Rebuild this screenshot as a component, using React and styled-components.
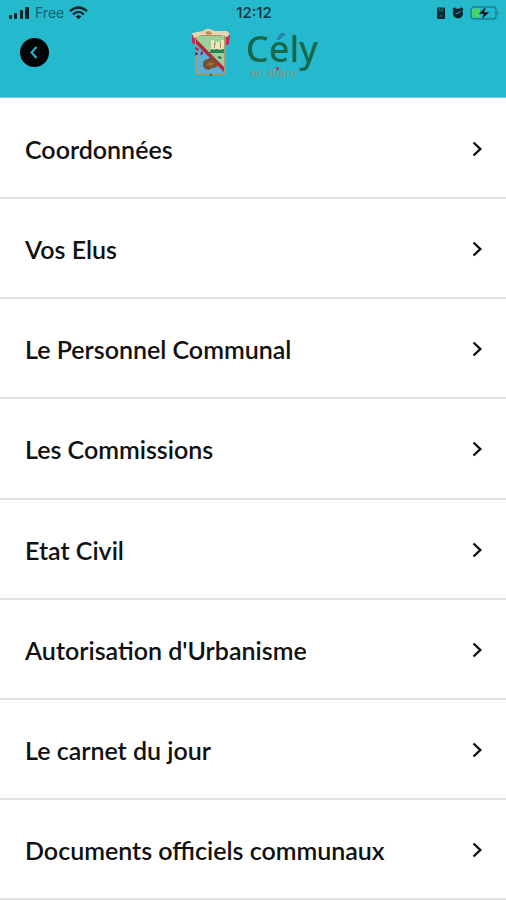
import React from "react";
import styled, { createGlobalStyle } from "styled-components";

const GlobalStyle = createGlobalStyle`
  *, *::before, *::after { box-sizing: border-box; }
  body { margin: 0; background: #fff; }
`;

const Page = styled.div`
  display: flex;
  flex-direction: column;
  min-height: 100vh;
  font-family: Lato, "Open Sans", sans-serif;
  color: #111;
`;

const Header = styled.header`
  background: #25b9cd;
  height: 98px;
  flex: none;
  border-bottom: 1px solid #78d3df;
`;

const StatusBar = styled.div`
  display: grid;
  grid-template-columns: 1fr auto 1fr;
  align-items: center;
  height: 26px;
  padding: 0 6px 0 8px;
  font-family: Inter, sans-serif;
  font-size: 14px;
  line-height: 26px;
`;

const StatusGroup = styled.div`
  display: flex;
  align-items: center;
  gap: ${(p) => p.$gap}px;
  justify-content: ${(p) => (p.$end ? "flex-end" : "flex-start")};
`;

const Carrier = styled.span`
  color: #126470;
`;

const Clock = styled.time`
  color: #06323a;
  font-size: 15px;
  font-weight: 500;
`;

const TitleBar = styled.div`
  display: grid;
  grid-template-columns: 1fr auto 1fr;
  align-items: center;
  height: 50px;
  padding: 0 20px;
`;

const BackButton = styled.button`
  display: flex;
  align-items: center;
  justify-content: center;
  width: 29px;
  height: 29px;
  padding: 0;
  border: 0;
  border-radius: 50%;
  background: #020607;
  color: #25b9cd;
  cursor: pointer;
`;

const Brand = styled.div`
  display: flex;
  align-items: center;
  gap: 14px;
  padding-left: 2px;
`;

const Wordmark = styled.div`
  display: flex;
  flex-direction: column;
`;

const TownName = styled.span`
  padding-bottom: 8px;
  margin-bottom: -11px;
  font: 500 36px/46px "Noto Sans", sans-serif;
  color: transparent;
  background:
    linear-gradient(#2a80bd, #2a80bd) 24px 0 / 17px 16px no-repeat,
    #17674a;
  background-clip: text;
  -webkit-background-clip: text;
`;

const TownSuffix = styled.span`
  position: relative;
  padding-left: 5px;
  font: 11px/10px "DejaVu Sans", sans-serif;
  color: #94907c;

  &::after {
    content: "";
    position: absolute;
    left: 30px;
    top: -2px;
    width: 3px;
    height: 3px;
    border-radius: 50%;
    background: #b92f55;
  }
`;

const Menu = styled.nav`
  display: flex;
  flex: 1;
`;

const MenuList = styled.ul`
  display: flex;
  flex: 1;
  flex-direction: column;
  margin: 0;
  padding: 1px 0 0;
  list-style: none;
`;

const MenuItem = styled.li`
  display: flex;
  flex: 1 0 100px;
  border-bottom: 2px solid #e3e3e3;
`;

const MenuLink = styled.a`
  display: flex;
  flex: 1;
  align-items: center;
  justify-content: space-between;
  padding: 2px 23px 0 25px;
  color: inherit;
  font-size: 25px;
  font-weight: 600;
  line-height: 32px;
  text-decoration: none;
`;

const entries = [
  "Coordonnées",
  "Vos Elus",
  "Le Personnel Communal",
  "Les Commissions",
  "Etat Civil",
  "Autorisation d'Urbanisme",
  "Le carnet du jour",
  "Documents officiels communaux",
];

const SignalIcon = () => (
  <svg width="22" height="13" viewBox="0 0 22 13" fill="#042329" aria-hidden="true">
    <rect x="1" y="8" width="3" height="4" rx="1" />
    <rect x="6" y="6" width="3" height="6" rx="1" />
    <rect x="12" y="3" width="3" height="9" rx="1" />
    <rect x="17" y="0" width="4" height="12" rx="1" />
  </svg>
);

const WifiIcon = () => (
  <svg width="19" height="14" viewBox="0 0 19 14" fill="none" stroke="#042329" strokeWidth="2.2" aria-hidden="true">
    <path d="M1 5.2Q9.500-2.200 18 5.200" />
    <path d="M4 8.300Q9.500 3.500 15 8.300" />
    <path d="M6.600 10.300Q9.500 8 12.400 10.300L9.500 13.200Z" fill="#042329" stroke="none" />
  </svg>
);

const LockIcon = () => (
  <svg width="10" height="14" viewBox="0 0 10 14" aria-hidden="true">
    <rect x="1" y="1.500" width="8" height="11.500" rx="1" fill="#06282e" />
    <path d="M3.700 2v3h2.600V2" fill="none" stroke="#1b8392" />
    <path d="M3.500 8.500h3v2.500h-3z" fill="#0f4d57" />
  </svg>
);

const AlarmIcon = () => (
  <svg width="12" height="14" viewBox="0 0 12 14" aria-hidden="true">
    <circle cx="6" cy="7.500" r="5" fill="#042227" />
    <path d="M1 4 3.500 2M8.500 2 11 4" stroke="#042227" strokeWidth="2" />
    <path d="M6 7.500H3.500M6 7.500 8.500 5" stroke="#1d91a1" strokeWidth="1.200" fill="none" />
  </svg>
);

const BatteryIcon = () => (
  <svg width="30" height="16" viewBox="0 0 30 16" aria-hidden="true">
    <rect x="1" y="2" width="25" height="12" rx="3" fill="none" stroke="#15808f" strokeWidth="1.300" />
    <path d="M4 3.500h6v9H4a2 2 0 0 1-2-2v-5a2 2 0 0 1 2-2Z" fill="#43d767" />
    <path d="M27.500 6q2 2 0 4Z" fill="#15808f" />
    <path d="M16.500 1 8.500 9h5l-2.300 6L19.500 7h-5.200Z" fill="#020b0d" stroke="#25b9cd" strokeWidth="0.500" />
  </svg>
);

const BackIcon = () => (
  <svg width="13" height="15" viewBox="0 0 13 15" fill="none" stroke="currentColor" strokeWidth="2" aria-hidden="true">
    <path d="M8.500 2 3.500 7.500l5 5.500" />
  </svg>
);

const ChevronIcon = () => (
  <svg width="12" height="18" viewBox="0 0 12 18" fill="none" stroke="#111" strokeWidth="2.400" aria-hidden="true">
    <path d="M2.500 2.500 9.300 9 2.500 15.500" />
  </svg>
);

const Crest = () => (
  <svg width="42" height="50" viewBox="0 0 42 50" role="img" aria-label="Blason de Cély">
    <path d="M2 7 6 6v11l-4-2ZM36 6l4 1-1 9-4 2Z" fill="#bd3158" />
    <path d="M5 7h31v37q0 3-3 3H8q-3 0-3-3Z" fill="#a89870" />
    <path d="M7 8h27v35q0 2-2 2H9q-2 0-2-2Z" fill="#9bcf9b" />
    <path d="M7 17 34 42v1q0 2-2 2H9q-2 0-2-2Z" fill="#5bafd6" />
    <path d="m6 11 28 28v5L6 16Z" fill="#b3263f" />
    <path d="M2 5 13 3q4-4 9-1l3 1h12l3 3-3 3-6-2H11l-7 3Z" fill="#e7d4b0" />
    <path d="m15 4 4-1 4 3-6 1Z" fill="#c88b58" />
    <path d="M21 12h3v9h-3ZM26 14h4v7h-4ZM31 12h3v9h-3ZM23 17h9v4h-9Z" fill="#f0e4b8" />
    <path d="M24.500 15v5M30.500 15v5" stroke="#8a7953" strokeWidth="0.800" />
    <path d="m20 23 2-2 2 1 3-1 3 1 4-1v4H20Z" fill="#278355" />
    <path d="m27 29 3-1 2 2-2 1Z" fill="#2f7348" />
    <path d="M13 38q-1-6 5-7l4-3 1 3q6 2 5 6-1 3-6 3l-3 2-4-1Z" fill="#79502f" />
    <path d="m16 37 4-3 5 1-4 3Z" fill="#a66a32" />
    <path d="m5 19 3 1 1 2-2 1Zm0 5 3 1v2H5Zm6-1 2 1v2l-3 1Z" fill="#783c70" />
    <path d="m5 20 2 1M11 26l1 1M6 27H5" stroke="#c6244b" strokeWidth="1.500" />
    <path d="M19 46h3l-1 3Z" fill="#43634c" />
  </svg>
);

export default function App() {
  return (
    <>
      <GlobalStyle />
      <Page>
        <Header>
          <StatusBar>
            <StatusGroup $gap={5}>
              <SignalIcon />
              <Carrier>Free</Carrier>
              <WifiIcon />
            </StatusGroup>
            <Clock>12:12</Clock>
            <StatusGroup $gap={6} $end>
              <LockIcon />
              <AlarmIcon />
              <BatteryIcon />
            </StatusGroup>
          </StatusBar>
          <TitleBar>
            <BackButton type="button" aria-label="Retour">
              <BackIcon />
            </BackButton>
            <Brand>
              <Crest />
              <Wordmark>
                <TownName>Cély</TownName>
                <TownSuffix>en Bière</TownSuffix>
              </Wordmark>
            </Brand>
          </TitleBar>
        </Header>
        <Menu aria-label="Mairie">
          <MenuList>
            {entries.map((label) => (
              <MenuItem key={label}>
                <MenuLink href="#">
                  {label}
                  <ChevronIcon />
                </MenuLink>
              </MenuItem>
            ))}
          </MenuList>
        </Menu>
      </Page>
    </>
  );
}
